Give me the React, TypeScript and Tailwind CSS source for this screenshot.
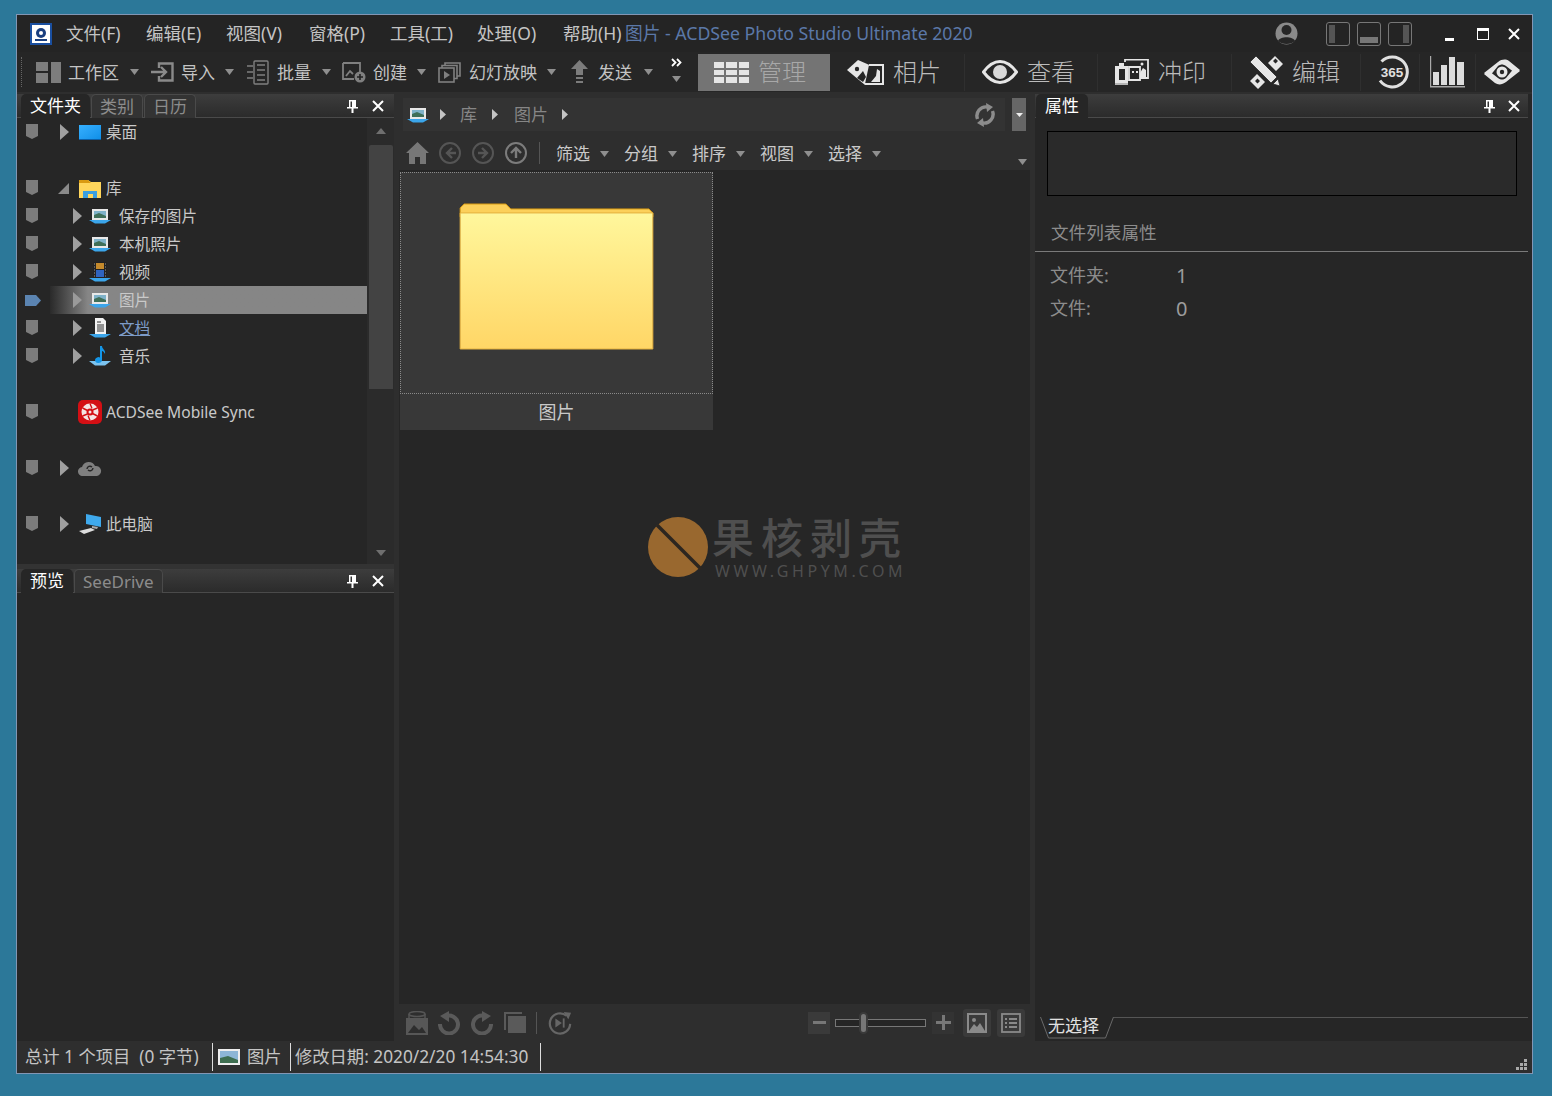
import type { ReactNode } from 'react';

const font = 'font-["Noto_Sans","Noto_Sans_CJK_SC",sans-serif]';

function Caret({ className = '' }: { className?: string }) {
  return (
    <svg width="9" height="6" viewBox="0 0 9 6" className={className}>
      <path d="M0 0h9L4.5 6z" fill="#8f8f8f" />
    </svg>
  );
}

function Shield({ active }: { active?: boolean }) {
  if (active) {
    return (
      <svg width="17" height="11" viewBox="0 0 17 11" className="ml-[-1px]">
        <path d="M0 0h11l5 5.5-5 5.5H0z" fill="#5b84b1" />
      </svg>
    );
  }
  return (
    <svg width="12" height="15" viewBox="0 0 12 15" className="mt-[-1px]">
      <path d="M0 0h12v12l-6 3-6-3z" fill="#7c7c7c" />
    </svg>
  );
}

function Arrow({ open, dim }: { open?: boolean; dim?: boolean }) {
  if (open) {
    return (
      <svg width="11" height="11" viewBox="0 0 11 11">
        <path d="M11 0v11H0z" fill="#8a8a8a" />
      </svg>
    );
  }
  return (
    <svg width="9" height="16" viewBox="0 0 9 16">
      <path d="M0 0l9 8-9 8z" fill={dim ? '#9a9a9a' : '#a0a0a0'} />
    </svg>
  );
}

function LibPic() {
  return (
    <svg width="22" height="16" viewBox="0 0 22 16">
      <path d="M0 12h22l-6 3.5H6z" fill="#3ba5ea" />
      <rect x="3" y="1" width="16" height="11" fill="#e8e8e8" />
      <rect x="5" y="3" width="12" height="7" fill="#7fb2c9" />
      <path d="M5 7l5-2 7 3v2H5z" fill="#3f6f58" />
    </svg>
  );
}

function VideoPic() {
  return (
    <svg width="22" height="20" viewBox="0 0 22 20">
      <path d="M0 16h22l-6 3.5H6z" fill="#3ba5ea" />
      <rect x="4" y="0" width="14" height="16" fill="#222" />
      <rect x="7" y="1" width="8" height="6" fill="#c58a2c" />
      <rect x="7" y="8" width="8" height="7" fill="#2f64c0" />
      <path d="M5 2h1M5 5h1M5 8h1M5 11h1M5 14h1M16 2h1M16 5h1M16 8h1M16 11h1M16 14h1" stroke="#999" />
    </svg>
  );
}

function DocPic() {
  return (
    <svg width="22" height="20" viewBox="0 0 22 20">
      <path d="M0 16h22l-6 3.5H6z" fill="#3ba5ea" />
      <path d="M6 0h8l3 3v13H6z" fill="#f2f2f2" />
      <path d="M8 4h4M8 7h7M8 9h7M8 11h7M8 13h7" stroke="#333" />
    </svg>
  );
}

function MusicPic() {
  return (
    <svg width="22" height="20" viewBox="0 0 22 20">
      <path d="M0 15h22l-6 4.5H6z" fill="#7cc4f0" />
      <path d="M11 0h2c0 3 4 4 3 8-1-2-2-3-3-3v9a3.5 3 0 1 1-2-2.6z" fill="#1496e8" />
    </svg>
  );
}

function Row({
  depth,
  arrow,
  icon,
  label,
  active,
  link,
}: {
  depth?: number;
  arrow?: 'open' | 'closed';
  icon?: ReactNode;
  label?: string;
  active?: boolean;
  link?: boolean;
}) {
  return (
    <div className="flex h-7 items-center">
      <div className="flex w-[33px] shrink-0 pl-[9px]">
        <Shield active={active} />
      </div>
      <div
        className={`flex h-7 flex-1 items-center ${
          active ? 'bg-gradient-to-r from-[#2a2a2a] via-[#868686] via-[12%] to-[#868686]' : ''
        }`}
      >
        <div className={`flex shrink-0 justify-end ${depth ? 'w-[32px]' : 'w-[19px]'}`}>
          {arrow === 'open' ? <Arrow open /> : arrow === 'closed' ? <Arrow dim={active} /> : null}
        </div>
        <div className={`flex w-[26px] shrink-0 items-center justify-center ${depth ? 'ml-[5px]' : 'ml-[8px]'}`}>
          {icon}
        </div>
        {label && (
          <span
            className={`whitespace-nowrap text-[15.6px] leading-7 ${depth ? 'ml-[6px]' : 'ml-[3px]'} ${
              link ? 'text-[#7d9cc9] underline' : 'text-[#c9c9c9]'
            }`}
          >
            {label}
          </span>
        )}
      </div>
    </div>
  );
}

function PinClose({ gap, right }: { gap: string; right: string }) {
  return (
    <div className={`flex items-center pt-[1px] ${gap} ${right}`}>
      <svg width="11" height="13" viewBox="0 0 11 13">
        <path d="M2 0h7v7h2v1.500H6.500V13h-2V8.500H0V7h2zM3.500 1.500V7H5V1.500z" fill="#fff" />
      </svg>
      <svg width="12" height="12" viewBox="0 0 12 12">
        <path d="M1 1l10 10M11 1L1 11" stroke="#fff" strokeWidth="2" />
      </svg>
    </div>
  );
}

function PanelTabs({ tabs, compact }: { tabs: string[]; compact?: boolean }) {
  return (
    <div className="flex h-6 items-end border-b border-[#4a4a4a] bg-gradient-to-b from-[#3d3d3d] to-[#2b2b2b]">
      <div className={`flex h-6 flex-1 items-end ${compact ? 'pl-px' : 'pl-[4px]'}`}>
        {tabs.map((t, i) => (
          <div
            key={t}
            className={`-mb-px flex h-6 items-center rounded-t-[5px] text-[17px] leading-6 ${
              i === 0 ? 'z-10 bg-[#262626] px-[9px] text-white' : 'ml-px border-x border-t border-[#4a4a4a] bg-[#333] px-[8px] text-[#8c8c8c]'
            }`}
          >
            {t}
          </div>
        ))}
      </div>
      <div className="self-center">
        {compact ? <PinClose gap="gap-[13px]" right="pr-[8px]" /> : <PinClose gap="gap-[14px]" right="pr-[10px]" />}
      </div>
    </div>
  );
}

const toolItems: { label: string; icon: ReactNode; iconW: number; width: number; textW: number }[] = [
  {
    label: '工作区',
    iconW: 32,
    textW: 62,
    width: 115,
    icon: (
      <svg width="25" height="21" viewBox="0 0 25 21">
        <path d="M0 0h12v9H0zM0 11h12v10H0zM15 0h10v21H15z" fill="#7d7d7d" />
      </svg>
    ),
  },
  {
    label: '导入',
    iconW: 30,
    textW: 44,
    width: 96,
    icon: (
      <svg width="23" height="20" viewBox="0 0 23 20" fill="none" stroke="#8a8a8a" strokeWidth="2.4">
        <path d="M8 6V1.5h13.5v17H8V14" />
        <path d="M0 10h14M10 5l5 5-5 5" />
      </svg>
    ),
  },
  {
    label: '批量',
    iconW: 30,
    textW: 45,
    width: 95,
    icon: (
      <svg width="22" height="25" viewBox="0 0 22 25" fill="none" stroke="#808080" strokeWidth="1.4">
        <rect x="7" y="1" width="14" height="23" rx="1" />
        <path d="M10 5h8M10 10h8M10 15h8M10 20h8M0 6h6M0 12h6M0 18h6" />
      </svg>
    ),
  },
  {
    label: '创建',
    iconW: 31,
    textW: 44,
    width: 96,
    icon: (
      <svg width="24" height="22" viewBox="0 0 24 22">
        <path d="M1 2h17v9" fill="none" stroke="#808080" strokeWidth="1.8" />
        <path d="M1 2v16h11" fill="none" stroke="#808080" strokeWidth="1.8" />
        <path d="M4 15l4-5 3 3" fill="none" stroke="#808080" strokeWidth="1.8" />
        <circle cx="18" cy="16" r="5.5" fill="#808080" />
        <path d="M15 16h6M18 13v6" stroke="#222" strokeWidth="1.6" />
      </svg>
    ),
  },
  {
    label: '幻灯放映',
    iconW: 31,
    textW: 78,
    width: 133,
    icon: (
      <svg width="23" height="21" viewBox="0 0 23 21" fill="none" stroke="#808080" strokeWidth="1.6">
        <rect x="1" y="6" width="15" height="14" />
        <path d="M4 6V3.5h15v13h-3M7 3.5V1h15v13h-3" />
        <path d="M6 9l6 4-6 4z" fill="#808080" stroke="none" />
      </svg>
    ),
  },
  {
    label: '发送',
    iconW: 27,
    textW: 46,
    width: 102,
    icon: (
      <svg width="17" height="24" viewBox="0 0 17 24">
        <path d="M8.5 0L17 9h-5v6H5V9H0zM5 17h7v2H5zM5 21h7v2H5z" fill="#7c7c7c" />
      </svg>
    ),
  },
];

const tabIcons: Record<string, ReactNode> = {
  相片: (
    <svg width="37" height="26" viewBox="0 0 37 26">
      <path d="M0 11L11 1l16 7-9 18z" fill="#e6e6e6" />
      <circle cx="10" cy="10" r="2.200" fill="#262626" />
      <path d="M10 19l6-7 3 6-3 5z" fill="#262626" />
      <path d="M22 6h14v19H18" fill="#262626" stroke="#e6e6e6" strokeWidth="2" />
      <path d="M24 23l5-6 1-7 3 2v11z" fill="#e6e6e6" />
    </svg>
  ),
  查看: (
    <svg width="36" height="24" viewBox="0 0 36 24">
      <path d="M1.500 12C7 4.500 12 1.500 18 1.500S29 4.500 34.500 12C29 19.500 24 22.500 18 22.500S7 19.500 1.500 12z" fill="none" stroke="#e6e6e6" strokeWidth="3" />
      <circle cx="18" cy="12" r="7" fill="#d8d8d8" />
    </svg>
  ),
  冲印: (
    <svg width="34" height="26" viewBox="0 0 34 26">
      <path d="M10 3V0.500h23V19H21" fill="none" stroke="#e6e6e6" strokeWidth="1.800" />
      <path d="M25 14l3-5 3 2v7h-8z" fill="#e6e6e6" />
      <circle cx="27" cy="5" r="1.500" fill="#e6e6e6" />
      <path d="M4 4h5v3H4zM0 7h13v17H0z" fill="#e6e6e6" />
      <path d="M4 10h6v11H4z" fill="#262626" />
      <path d="M14 8h11v13H14z" fill="#262626" stroke="#e6e6e6" strokeWidth="1.800" />
      <path d="M17 12h2v2h-2zM21 12h2v2h-2z" fill="#e6e6e6" />
      <path d="M0 25h13" stroke="#e6e6e6" strokeWidth="1.500" />
    </svg>
  ),
  编辑: (
    <svg width="34" height="34" viewBox="0 0 34 34">
      <path d="M19 8l7-7 8 8-7 7zM1 26l7-7 8 8-7 7z" fill="#e6e6e6" />
      <path d="M24 6l2.500-2.500 2.500 2.500-2.500 2.500zM6 26l2.500-2.500L11 26l-2.500 2.500z" fill="#262626" />
      <path d="M1 7l6-6 21 21-6 6zM24 29l5-5 2 7z" fill="#e6e6e6" stroke="#262626" strokeWidth="0.800" />
    </svg>
  ),
};

function ViewTab({ label, width, active }: { label: string; width: number; active?: boolean }) {
  return (
    <div
      style={{ width }}
      className={`flex h-[37px] shrink-0 items-center pl-[17px] ${active ? 'bg-[#747474]' : 'border-r border-[#2f2f2f]'}`}
    >
      {active ? (
        <svg width="35" height="21" viewBox="0 0 35 21" className="ml-[-1px]">
          <path d="M0 0h10v6H0zM12 0h11v6H12zM25 0h10v6H25zM0 8h10v5H0zM12 8h11v5H12zM25 8h10v5H25zM0 15h10v6H0zM12 15h11v6H12zM25 15h10v6H25z" fill="#e6e6e6" />
        </svg>
      ) : (
        tabIcons[label]
      )}
      <span className={`ml-[9px] whitespace-nowrap text-[24px] font-light leading-none ${active ? 'text-[#a8a8a8]' : 'text-[#bcbcbc]'}`}>
        {label}
      </span>
    </div>
  );
}

function FilterMenu({ label }: { label: string }) {
  return (
    <div className="flex w-[68px] shrink-0 items-center pt-[2px]">
      <span className="text-[17px] leading-none text-[#c9c9c9]">{label}</span>
      <Caret className="ml-[10px]" />
    </div>
  );
}

export default function App() {
  return (
    <div className={`h-[1096px] w-[1552px] overflow-hidden bg-[#2c7899] pl-[16px] pt-[14px] ${font}`}>
      <div className="flex h-[1060px] w-[1517px] flex-col border border-[#8296b4] bg-[#262626]">
        {/* menu + title */}
        <div className="flex h-[37px] shrink-0 items-center bg-[#242424]">
          <div className="ml-[13px] flex h-[22px] w-[22px] shrink-0 items-center justify-center border-2 border-[#1a4fa0] bg-white">
            <svg width="16" height="16" viewBox="0 0 16 16">
              <circle cx="8" cy="7" r="5" fill="#1a3f80" />
              <circle cx="8" cy="7" r="2" fill="#fff" />
              <path d="M2 13h12v2H2z" fill="#1a3f80" />
            </svg>
          </div>
          <div className="ml-[14px] flex text-[17.500px] text-[#c4c4c4]">
            {[
              ['文件(F)', 'w-[80px]'],
              ['编辑(E)', 'w-[80px]'],
              ['视图(V)', 'w-[83px]'],
              ['窗格(P)', 'w-[81px]'],
              ['工具(工)', 'w-[87px]'],
              ['处理(O)', 'w-[86px]'],
              ['帮助(H)', 'w-[62px]'],
            ].map(([t, w]) => (
              <span key={t} className={`whitespace-nowrap ${w}`}>
                {t}
              </span>
            ))}
          </div>
          <span className="whitespace-nowrap text-[17.700px] text-[#5b78a8]">图片 - ACDSee Photo Studio Ultimate 2020</span>
          <div className="flex-1" />
          <svg width="23" height="25" viewBox="0 0 23 25" className="mr-[28px]">
            <circle cx="11.500" cy="12.500" r="11" fill="#8a8a8a" />
            <circle cx="11.500" cy="9" r="5" fill="#262626" />
            <path d="M3 20c2-5 15-5 17 0-4 4-13 4-17 0z" fill="#262626" />
          </svg>
          <div className="mr-[33px] flex gap-[7px]">
            <div className="flex h-[24px] w-[24px] rounded-[3px] border border-[#777] p-[2px]">
              <div className="w-[6px] bg-[#555]" />
            </div>
            <div className="flex h-[24px] w-[24px] items-end rounded-[3px] border border-[#777] p-[2px]">
              <div className="h-[6px] w-full bg-[#777]" />
            </div>
            <div className="flex h-[24px] w-[24px] justify-end rounded-[3px] border border-[#777] p-[2px]">
              <div className="w-[6px] bg-[#555]" />
            </div>
          </div>
          <div className="mb-[-12px] mr-[23px] h-[3px] w-[9px] bg-white" />
          <div className="mr-[19px] h-[12px] w-[12px] border border-t-[3px] border-white" />
          <svg width="12" height="12" viewBox="0 0 12 12" className="mr-[12px]">
            <path d="M1 1l10 10M11 1L1 11" stroke="#fff" strokeWidth="2" />
          </svg>
        </div>

        {/* toolbar */}
        <div className="flex h-[40px] shrink-0 items-center bg-[#262626]">
          <div className="ml-[4px] mr-[14px] h-[30px] w-[1px] border-l border-dotted border-[#666]" />
          <div className="flex w-[662px] shrink-0 items-center">
            {toolItems.map((it) => (
              <div key={it.label} style={{ width: it.width }} className="flex shrink-0 items-center">
                <div style={{ width: it.iconW }} className="flex shrink-0 items-center justify-start">
                  {it.icon}
                </div>
                <span style={{ width: it.textW }} className="shrink-0 whitespace-nowrap text-[17px] leading-none text-[#c4c4c4]">
                  {it.label}
                </span>
                <Caret />
              </div>
            ))}
            <div className="ml-[-3px] flex w-[12px] flex-col items-center gap-[9px] pb-[4px]">
              <svg width="11" height="9" viewBox="0 0 11 9" fill="none" stroke="#fff" strokeWidth="1.800">
                <path d="M1 1l3.500 3.500L1 8M6 1l3.500 3.500L6 8" />
              </svg>
              <Caret />
            </div>
          </div>
          <ViewTab label="管理" width={132} active />
          <ViewTab label="相片" width={135} />
          <ViewTab label="查看" width={133} />
          <ViewTab label="冲印" width={134} />
          <ViewTab label="编辑" width={129} />
          <div className="flex h-[37px] w-[59px] shrink-0 items-center justify-center border-r border-[#2f2f2f]">
            <svg width="34" height="34" viewBox="0 0 34 34" className="ml-[3px]">
              <path d="M6.500 6.500a15 15 0 1 1-1.500 19" fill="none" stroke="#e0e0e0" strokeWidth="3" />
              <text x="17" y="22" textAnchor="middle" fontSize="13.500" fontWeight="700" fill="#e0e0e0" fontFamily="Liberation Sans">365</text>
            </svg>
          </div>
          <div className="flex h-[37px] w-[56px] shrink-0 items-center justify-center border-r border-[#2f2f2f]">
            <svg width="35" height="32" viewBox="0 0 35 32">
              <path d="M0 0h1.200v30H35v1.500H0z" fill="#aaa" />
              <path d="M3 16h6v13H3zM11 9h6v20h-6zM19 1h6v28h-6zM27 6h7v23h-7z" fill="#dcdcdc" />
            </svg>
          </div>
          <div className="flex h-[37px] w-[52px] shrink-0 items-center justify-center">
            <svg width="36" height="28" viewBox="0 0 36 28">
              <path d="M0 15L14 4c4-3 8-3 11-1l11 9-5 3-9-7c-3-2-5-2-8 0L5 19z" fill="#e6e6e6" />
              <path d="M36 13L22 24c-4 3-8 3-11 1L0 16l5-3 9 7c3 2 5 2 8 0l9-11z" fill="#e6e6e6" />
              <circle cx="18" cy="14" r="5.500" fill="#e6e6e6" />
              <circle cx="18" cy="14" r="2.200" fill="#262626" />
            </svg>
          </div>
        </div>

        {/* body */}
        <div className="flex min-h-0 flex-1 bg-[#2e2e2e] pt-[2px]">
          {/* left */}
          <div className="flex w-[377px] shrink-0 flex-col">
            <PanelTabs tabs={['文件夹', '类别', '日历']} />
            <div className="flex h-[446px] shrink-0 bg-[#262626]">
              <div className="flex-1">
                <Row arrow="closed" label="桌面" icon={<div className="h-[15px] w-[22px] border-b border-[#0b5fa8] bg-gradient-to-br from-[#36b0ff] to-[#0d8fe8]" />} />
                <div className="h-7" />
                <Row
                  arrow="open"
                  label="库"
                  icon={
                    <svg width="22" height="19" viewBox="0 0 22 19">
                      <path d="M0 1h9l3 2h10v16H0z" fill="#ffd65c" />
                      <path d="M0 1h9l3 3H0z" fill="#d99a12" />
                      <path d="M4 19v-7h14v7h-4v-4H9v4z" fill="#3b9fe0" />
                    </svg>
                  }
                />
                <Row depth={1} arrow="closed" label="保存的图片" icon={<LibPic />} />
                <Row depth={1} arrow="closed" label="本机照片" icon={<LibPic />} />
                <Row depth={1} arrow="closed" label="视频" icon={<VideoPic />} />
                <Row depth={1} arrow="closed" label="图片" icon={<LibPic />} active />
                <Row depth={1} arrow="closed" label="文档" icon={<DocPic />} link />
                <Row depth={1} arrow="closed" label="音乐" icon={<MusicPic />} />
                <div className="h-7" />
                <Row
                  label="ACDSee Mobile Sync"
                  icon={
                    <svg width="24" height="24" viewBox="0 0 24 24">
                      <rect width="24" height="24" rx="5" fill="#d40f14" />
                      <circle cx="12" cy="12" r="8.500" fill="#f4e4e4" />
                      <circle cx="12" cy="12" r="3.500" fill="#d40f14" />
                      <circle cx="12" cy="12" r="1.500" fill="#f4e4e4" />
                      <path d="M12 3.500l2 5M19.500 8l-5 2M19.500 16l-5-2.500M12 20.500l-2-5M4.500 16l5-2M4.500 8l5 2.500" stroke="#d40f14" strokeWidth="1.400" />
                    </svg>
                  }
                />
                <div className="h-7" />
                <Row
                  arrow="closed"
                  icon={
                    <svg width="24" height="16" viewBox="0 0 24 16">
                      <path d="M5 16a4.500 4.500 0 0 1-1-9 7 7 0 0 1 13-1 5 5 0 0 1 2 10z" fill="#7f7f7f" />
                      <path d="M9 9a3 3 0 0 1 5-2M15 8a3 3 0 0 1-5 2" fill="none" stroke="#262626" strokeWidth="1.400" />
                    </svg>
                  }
                />
                <div className="h-7" />
                <Row
                  arrow="closed"
                  label="此电脑"
                  icon={
                    <svg width="24" height="20" viewBox="0 0 24 20">
                      <path d="M8 0l15 3v10L8 10z" fill="#3fa9ec" />
                      <path d="M1 17l12-3 4 2-11 4z" fill="#ddd" />
                      <path d="M14 12l6 1-1 2-5-1z" fill="#aaa" />
                    </svg>
                  }
                />
              </div>
              <div className="flex w-[27px] shrink-0 flex-col items-center bg-[#2b2b2b] pt-[10px]">
                <svg width="10" height="6" viewBox="0 0 10 6">
                  <path d="M5 0l5 6H0z" fill="#6f6f6f" />
                </svg>
                <div className="mt-[11px] h-[244px] w-[24px] rounded-t-[2px] bg-[#434343]" />
                <div className="flex-1" />
                <svg width="10" height="6" viewBox="0 0 10 6" className="mb-[8px]">
                  <path d="M0 0h10L5 6z" fill="#6f6f6f" />
                </svg>
              </div>
            </div>
            <div className="h-[5px] shrink-0 bg-[#333]" />
            <PanelTabs tabs={['预览', 'SeeDrive']} />
            <div className="flex-1 bg-[#262626]" />
          </div>

          {/* center */}
          <div className="ml-[5px] flex w-[631px] shrink-0 flex-col">
            <div className="flex h-[4px] shrink-0" />
            <div className="flex h-[33px] shrink-0 items-center">
              <div className="ml-[4px] flex h-[33px] w-[602px] items-center bg-[#333] pl-[4px]">
                <LibPic />
                <div className="ml-[11px]">
                  <svg width="6" height="11" viewBox="0 0 6 11"><path d="M0 0l6 5.500-6 5.500z" fill="#c4c4c4" /></svg>
                </div>
                <span className="ml-[14px] text-[17px] leading-none text-[#868686]">库</span>
                <div className="ml-[15px]">
                  <svg width="6" height="11" viewBox="0 0 6 11"><path d="M0 0l6 5.500-6 5.500z" fill="#c4c4c4" /></svg>
                </div>
                <span className="ml-[16px] text-[17px] leading-none text-[#868686]">图片</span>
                <div className="ml-[14px]">
                  <svg width="6" height="11" viewBox="0 0 6 11"><path d="M0 0l6 5.500-6 5.500z" fill="#c4c4c4" /></svg>
                </div>
                <div className="flex-1" />
                <svg width="22" height="24" viewBox="0 0 22 24" className="mr-[9px]" fill="none" stroke="#8c8c8c" strokeWidth="3.400">
                  <path d="M3.500 16a9 9 0 0 1 10-12" />
                  <path d="M18.500 8a9 9 0 0 1-10 12" />
                  <path d="M12 0l7 4-6 5zM10 24l-7-4 6-5z" fill="#8c8c8c" stroke="none" />
                </svg>
              </div>
              <div className="ml-[7px] flex h-[33px] w-[14px] items-center justify-center bg-[#666]">
                <svg width="7" height="4" viewBox="0 0 7 4"><path d="M0 0h7L3.500 4z" fill="#eee" /></svg>
              </div>
            </div>
            <div className="mt-[4px] flex h-[35px] shrink-0 items-center bg-[#2e2e2e] pl-[7px]">
              <svg width="23" height="22" viewBox="0 0 23 22" className="mr-[10px]">
                <path d="M11.500 0L23 11h-3v11h-6v-7H9v7H3V11H0z" fill="#777" />
              </svg>
              {['M13 6l-5 5 5 5M8 11h9', 'M10 6l5 5-5 5M15 11H6', 'M6 11l5-5 5 5M11 6v10'].map((d, i) => (
                <svg key={d} width="22" height="22" viewBox="0 0 22 22" fill="none" stroke={i === 2 ? '#7c7c7c' : '#555'} strokeWidth="2" className="mr-[11px]">
                  <circle cx="11" cy="11" r="10" />
                  <path d={d} strokeWidth="2.400" />
                </svg>
              ))}
              <div className="ml-[1px] mr-[16px] h-[22px] w-px bg-[#555]" />
              <FilterMenu label="筛选" />
              <FilterMenu label="分组" />
              <FilterMenu label="排序" />
              <FilterMenu label="视图" />
              <FilterMenu label="选择" />
              <div className="flex-1" />
              <Caret className="mr-[3px] mt-[18px]" />
            </div>
            <div className="relative min-h-0 flex-1 bg-[#262626] pl-px pt-[2px]">
              <div className="w-[313px] bg-[#383838]">
                <div className="flex h-[222px] items-start justify-center border border-dotted border-[#8a8a8a] pt-[30px]">
                  <svg width="195" height="147" viewBox="0 0 196 148">
                    <defs>
                      <linearGradient id="folder" x1="0" y1="0" x2="0" y2="1">
                        <stop offset="0" stopColor="#fff79c" />
                        <stop offset="1" stopColor="#ffd666" />
                      </linearGradient>
                    </defs>
                    <path d="M1 12V5l4-4h42l5 5h139l4 4v4H1z" fill="#fcd05a" stroke="#d89a12" />
                    <path d="M1 10h194v137H1z" fill="url(#folder)" stroke="#e3b040" />
                  </svg>
                </div>
                <div className="flex h-[36px] items-center justify-center text-[18px] text-[#c9c9c9]">图片</div>
              </div>
              <div className="absolute left-[248px] top-[346px] flex items-start">
                <svg width="62" height="62" viewBox="0 0 62 62">
                  <circle cx="31" cy="31" r="30" fill="#99682f" />
                  <path d="M10 9l44 44" stroke="#2c2620" strokeWidth="3.500" />
                </svg>
                <div className="ml-[3px] flex flex-col">
                  <div className="whitespace-nowrap text-[42px] font-medium leading-[44px] tracking-[7px] text-[#4f4f4f]">果核剥壳</div>
                  <div className="mt-[3px] whitespace-nowrap pl-[3px] text-[16px] leading-[16px] tracking-[3.600px] text-[#4f4f4f]">WWW.GHPYM.COM</div>
                </div>
              </div>
            </div>
            <div className="flex h-[37px] shrink-0 items-center bg-[#2e2e2e] pl-[7px]">
              <svg width="22" height="24" viewBox="0 0 22 24" className="mr-[10px]">
                <ellipse cx="11" cy="3" rx="8" ry="2.500" fill="none" stroke="#555" strokeWidth="1.500" />
                <path d="M3 3v4M19 3v4" stroke="#555" strokeWidth="1.500" />
                <path d="M0 7h22v17H0z" fill="#575757" />
                <path d="M2 22l6-8 5 5 3-3 4 6z" fill="#2e2e2e" />
              </svg>
              <svg width="22" height="24" viewBox="0 0 22 24" fill="none" stroke="#5a5a5a" strokeWidth="4" className="mr-[11px]">
                <path d="M8 5a9 9 0 1 1 -6 8" />
                <path d="M11 0v11L2 5z" fill="#5a5a5a" stroke="none" />
              </svg>
              <svg width="22" height="24" viewBox="0 0 22 24" fill="none" stroke="#5a5a5a" strokeWidth="4" className="mr-[11px]">
                <path d="M14 5a9 9 0 1 0 6 8" />
                <path d="M11 0v11l9-6z" fill="#5a5a5a" stroke="none" />
              </svg>
              <svg width="22" height="21" viewBox="0 0 22 21" className="mr-[10px]">
                <path d="M0 0h18v2H2v16H0z" fill="#5a5a5a" />
                <path d="M4 4h18v17H4z" fill="#5a5a5a" />
              </svg>
              <div className="mr-[11px] h-[22px] w-px bg-[#555]" />
              <svg width="24" height="24" viewBox="0 0 26 26" fill="none" stroke="#666" strokeWidth="2.400">
                <path d="M20 5a11 11 0 1 0 4 9" />
                <path d="M8 8l7 5-7 5z" fill="#666" stroke="none" />
                <path d="M16 8h2v10h-2z" fill="#666" stroke="none" />
                <path d="M17 1l8 1-3 7z" fill="#666" stroke="none" />
              </svg>
              <div className="flex-1" />
              <div className="flex h-[22px] w-[22px] items-center justify-center bg-[#3a3a3a]">
                <div className="h-[3px] w-[13px] bg-[#777]" />
              </div>
              <div className="relative ml-[5px] h-[8px] w-[91px] border border-[#777] bg-[#262626]">
                <div className="absolute left-[23px] top-[-8px] h-[22px] w-[9px] rounded-full border-2 border-[#3a3a3a] bg-[#777]" />
              </div>
              <div className="ml-[6px] flex h-[22px] w-[22px] items-center justify-center bg-[#333]">
                <svg width="15" height="15" viewBox="0 0 15 15">
                  <path d="M6 0h3v6h6v3H9v6H6V9H0V6h6z" fill="#777" />
                </svg>
              </div>
              <div className="ml-[9px] flex h-[28px] w-[28px] items-center justify-center rounded-[3px] bg-[#3a3a3a]">
                <svg width="20" height="20" viewBox="0 0 20 20">
                  <rect x="1" y="1" width="18" height="18" fill="none" stroke="#8a8a8a" strokeWidth="2" />
                  <circle cx="7" cy="7" r="2" fill="#8a8a8a" />
                  <path d="M2 18l5-7 3 3 3-4 5 8z" fill="#8a8a8a" />
                </svg>
              </div>
              <div className="ml-[6px] mr-[5px] flex h-[28px] w-[28px] items-center justify-center rounded-[3px] bg-[#3a3a3a]">
                <svg width="20" height="20" viewBox="0 0 20 20" fill="none" stroke="#8a8a8a" strokeWidth="1.800">
                  <rect x="1" y="1" width="18" height="18" />
                  <path d="M4 6h2M8 6h8M4 10h2M8 10h8M4 14h2M8 14h8" />
                </svg>
              </div>
            </div>
          </div>

          {/* right */}
          <div className="ml-[5px] flex w-[493px] shrink-0 flex-col">
            <PanelTabs tabs={['属性']} compact />
            <div className="flex min-h-0 flex-1 flex-col bg-[#262626]">
              <div className="ml-[12px] mt-[13px] h-[65px] w-[470px] border border-black bg-[#2a2a2a]" />
              <div className="ml-[16px] mt-[24px] text-[17.600px] leading-[24px] text-[#8c8c8c]">文件列表属性</div>
              <div className="mt-[7px] h-px bg-[#7a7a7a]" />
              <div className="ml-[15px] mt-[7px] flex h-[33px] items-center text-[18px] text-[#8c8c8c]">
                <span className="w-[126px]">文件夹:</span>
                <span className="text-[20px] leading-none text-[#9c9c9c]">1</span>
              </div>
              <div className="ml-[15px] flex h-[33px] items-center text-[18px] text-[#8c8c8c]">
                <span className="w-[126px]">文件:</span>
                <span className="text-[20px] leading-none text-[#9c9c9c]">0</span>
              </div>
              <div className="flex-1" />
              <div className="flex h-[24px] shrink-0 items-start">
                <div className="relative mb-[-1px] ml-[13px] h-[22px] w-[66px] text-left text-[17px] leading-[18px] text-[#e0e0e0]">
                  无选择
                  <svg width="74" height="22" viewBox="0 0 74 22" className="absolute left-[-8px] top-0">
                    <path d="M0.500 0l8 21h57l8-21" fill="none" stroke="#6a6a6a" />
                  </svg>
                </div>
                <div className="h-px flex-1 bg-[#555]" />
              </div>
            </div>
          </div>
          <div className="flex-1 bg-[#262626]" />
        </div>

        {/* status */}
        <div className="flex h-[32px] shrink-0 items-center bg-[#2e2e2e] text-[17.300px] text-[#c4c4c4]">
          <span className="ml-[8px] w-[187px] whitespace-nowrap">总计 1 个项目 &nbsp;(0 字节)</span>
          <div className="h-[28px] w-px bg-[#ddd]" />
          <svg width="22" height="16" viewBox="0 0 22 16" className="ml-[5px]">
            <rect width="22" height="16" fill="#eee" />
            <rect x="2" y="2" width="18" height="12" fill="#8db6d6" />
            <path d="M2 9l8-2 10 4v3H2z" fill="#3e6e50" />
          </svg>
          <span className="ml-[7px] w-[43px] whitespace-nowrap">图片</span>
          <div className="h-[28px] w-px bg-[#ddd]" />
          <span className="ml-[4px] w-[245px] whitespace-nowrap">修改日期: 2020/2/20 14:54:30</span>
          <div className="h-[28px] w-px bg-[#ddd]" />
          <div className="flex-1" />
          <svg width="11" height="11" viewBox="0 0 11 11" className="mb-[-14px] mr-[5px]">
            <path d="M8 0h3v3H8zM4 4h3v3H4zM8 4h3v3H8zM0 8h3v3H0zM4 8h3v3H4zM8 8h3v3H8z" fill="#aaa" />
          </svg>
        </div>
      </div>
    </div>
  );
}
